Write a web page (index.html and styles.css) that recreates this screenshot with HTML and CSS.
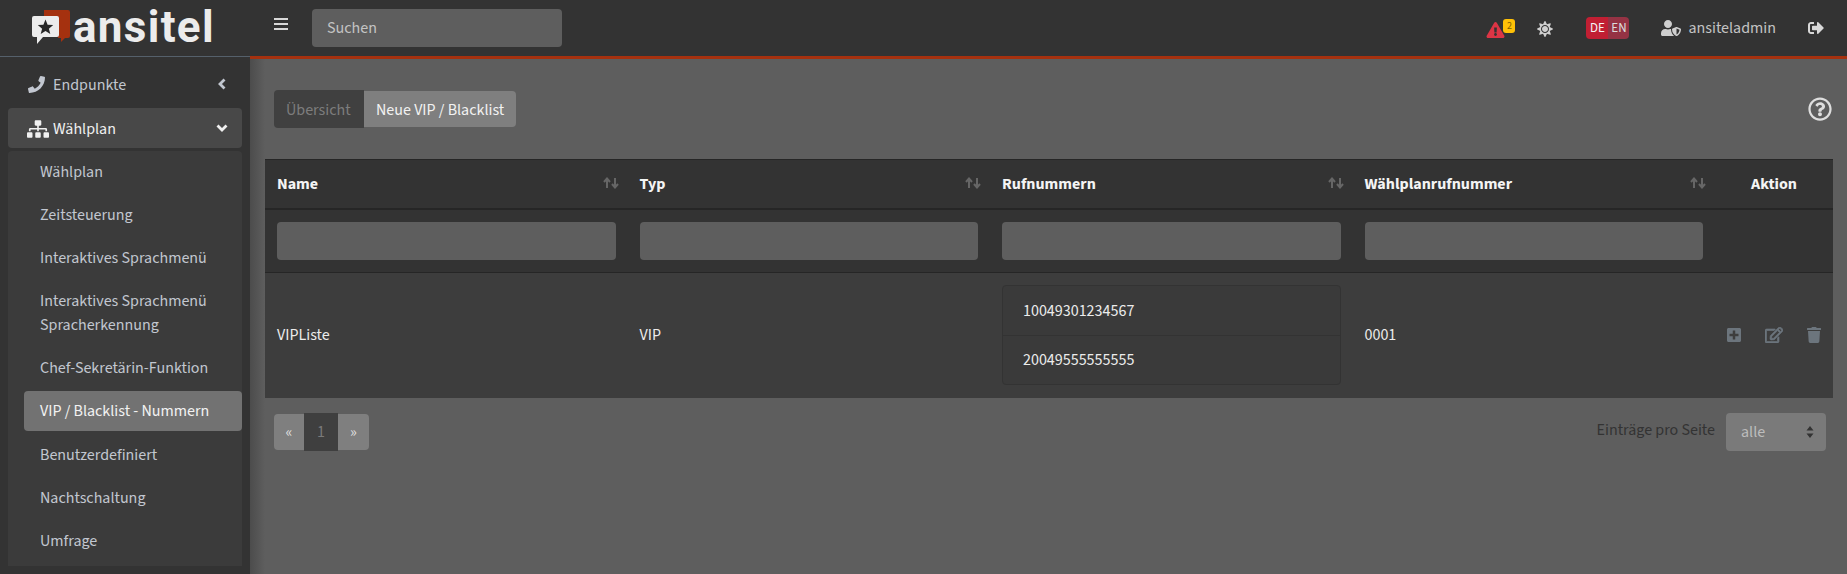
FILE: index.html
```html
<!DOCTYPE html>
<html lang="de">
<head>
<meta charset="utf-8">
<title>ansitel</title>
<link rel="stylesheet" href="styles.css">
</head>
<body>
<svg class="defs" width="0" height="0">
  <symbol id="sort" viewBox="0 0 16 12"><path d="M4 11V2M1 5l3-3.5L7 5M12 1v9M9 7l3 3.5L15 7" fill="none" stroke="currentColor" stroke-width="2"/></symbol>
</svg>
<div class="app">
  <aside class="sidebar">
    <div class="brand">
      <svg class="logo-mark" viewBox="0 0 40 34">
        <path d="M12 0h24a2 2 0 0 1 2 2v24a2 2 0 0 1-2 2h-3l-4 4v-4h-3V8H12z" fill="#a5310f"/>
        <path d="M2 6h23a2 2 0 0 1 2 2v17a2 2 0 0 1-2 2H11l-6 7v-7H2a2 2 0 0 1-2-2V8a2 2 0 0 1 2-2z" fill="#ececec"/>
        <path d="M13.5 9.500l2.100 5.200 5.600.4-4.300 3.600 1.400 5.400-4.800-3-4.800 3 1.400-5.400-4.300-3.600 5.600-.4z" fill="#262626"/>
      </svg>
      <span class="logo-text">ansitel</span>
    </div>
    <nav class="nav">
      <a class="nav-top">
        <svg class="nav-icon phone" viewBox="0 0 512 512"><path d="M493.4 24.6l-104-24c-11.3-2.6-22.9 3.3-27.5 13.9l-48 112c-4.2 9.8-1.4 21.3 6.9 28l60.6 49.6c-36 76.7-98.9 140.5-177.2 177.2l-49.6-60.6c-6.8-8.3-18.2-11.1-28-6.9l-112 48C3.9 366.5-2 378.1.6 389.4l24 104C27.1 504.2 36.7 512 48 512c256.1 0 464-207.5 464-464 0-11.2-7.7-20.9-18.6-23.4z"/></svg>
        <span class="nav-label">Endpunkte</span>
        <svg class="chev" viewBox="0 0 10 12"><path d="M7.500 1.500L3 6l4.500 4.500" fill="none" stroke="currentColor" stroke-width="2.800"/></svg>
      </a>
      <a class="nav-top nav-open">
        <svg class="nav-icon sitemap" viewBox="0 0 640 512"><path d="M128 352H32c-17.67 0-32 14.33-32 32v96c0 17.67 14.33 32 32 32h96c17.67 0 32-14.33 32-32v-96c0-17.67-14.33-32-32-32zm-24-80h192v48h48v-48h192v48h48v-57.59c0-21.17-17.23-38.41-38.41-38.41H344v-64h40c17.67 0 32-14.33 32-32V32c0-17.67-14.33-32-32-32H256c-17.67 0-32 14.33-32 32v96c0 17.67 14.33 32 32 32h40v64H94.41C73.23 224 56 241.23 56 262.41V320h48v-48zm264 80h-96c-17.67 0-32 14.33-32 32v96c0 17.67 14.33 32 32 32h96c17.67 0 32-14.33 32-32v-96c0-17.67-14.33-32-32-32zm240 0h-96c-17.67 0-32 14.33-32 32v96c0 17.67 14.33 32 32 32h96c17.67 0 32-14.33 32-32v-96c0-17.67-14.33-32-32-32z"/></svg>
        <span class="nav-label">Wählplan</span>
        <svg class="chev chev-open" viewBox="0 0 12 10"><path d="M1.500 2.500L6 7l4.500-4.500" fill="none" stroke="currentColor" stroke-width="2.800"/></svg>
      </a>
      <ul class="subnav">
        <li><a class="sub-item">Wählplan</a></li>
        <li><a class="sub-item">Zeitsteuerung</a></li>
        <li><a class="sub-item">Interaktives Sprachmenü</a></li>
        <li><a class="sub-item">Interaktives Sprachmenü Spracherkennung</a></li>
        <li><a class="sub-item">Chef-Sekretärin-Funktion</a></li>
        <li><a class="sub-item sub-active">VIP / Blacklist - Nummern</a></li>
        <li><a class="sub-item">Benutzerdefiniert</a></li>
        <li><a class="sub-item">Nachtschaltung</a></li>
        <li><a class="sub-item">Umfrage</a></li>
      </ul>
    </nav>
  </aside>
  <div class="main">
    <header class="topbar">
      <svg class="burger" viewBox="0 0 14 14"><path d="M0 2h14M0 7h14M0 12h14" stroke="currentColor" stroke-width="2.200"/></svg>
      <input class="search" type="text" placeholder="Suchen">
      <div class="top-right">
        <div class="alert">
          <svg class="alert-icon" viewBox="0 0 576 512"><path d="M569.517 440.013C587.975 472.007 564.806 512 527.94 512H48.054c-36.937 0-59.999-40.055-41.577-71.987L246.423 23.985c18.467-32.009 64.72-31.951 83.154 0l239.94 416.028zM288 354c-25.405 0-46 20.595-46 46s20.595 46 46 46 46-20.595 46-46-20.595-46-46-46zm-43.673-165.346l7.418 136c.347 6.364 5.609 11.346 11.982 11.346h48.546c6.373 0 11.635-4.982 11.982-11.346l7.418-136c.375-6.874-5.098-12.654-11.982-12.654h-63.383c-6.884 0-12.356 5.78-11.981 12.654z"/></svg>
          <span class="badge">2</span>
        </div>
        <svg class="sun" viewBox="0 0 512 512"><path d="M256 160c-52.9 0-96 43.1-96 96s43.1 96 96 96 96-43.1 96-96-43.1-96-96-96zm246.4 80.5l-94.7-47.3 33.5-100.4c4.5-13.600-8.400-26.500-21.900-21.900l-100.400 33.500-47.400-94.800c-6.400-12.800-24.600-12.800-31 0l-47.300 94.700L92.700 70.800c-13.600-4.500-26.500 8.400-21.900 21.900l33.500 100.400-94.700 47.400c-12.800 6.400-12.800 24.600 0 31l94.700 47.300-33.500 100.500c-4.500 13.600 8.400 26.500 21.900 21.900l100.400-33.500 47.300 94.700c6.400 12.800 24.600 12.800 31 0l47.300-94.700 100.400 33.500c13.600 4.500 26.500-8.400 21.900-21.900l-33.500-100.400 94.700-47.300c13-6.500 13-24.700.2-31.100zm-155.900 106c-49.900 49.900-131.100 49.900-181 0-49.900-49.900-49.900-131.100 0-181 49.900-49.900 131.100-49.900 181 0 49.900 49.900 49.900 131.100 0 181z"/></svg>
        <div class="lang"><span class="lang-de">DE</span><span class="lang-en">EN</span></div>
        <svg class="user-icon" viewBox="0 0 640 512"><path d="M622.3 271.100l-115.200-45c-4.100-1.600-12.600-3.700-22.200 0l-115.200 45c-10.700 4.200-17.700 14-17.700 24.900 0 111.600 68.700 188.800 132.900 213.900 9.600 3.700 18 1.600 22.200 0C558.400 489.900 640 420.500 640 296c0-10.900-7-20.700-17.700-24.900zM496 462.400V273.300l95.500 37.300c-5.600 87.100-60.900 135.400-95.500 151.800zM224 256c70.700 0 128-57.300 128-128S294.700 0 224 0 96 57.300 96 128s57.300 128 128 128zm96 40c0-2.500.8-4.800 1.100-7.200-2.500-.1-4.900-.8-7.500-.8h-16.700c-22.200 10.200-46.900 16-72.900 16s-50.600-5.800-72.900-16h-16.700C60.200 288 0 348.200 0 422.400V464c0 26.500 21.500 48 48 48h352c6.800 0 13.300-1.500 19.200-4-54-42.900-99.200-116.700-99.200-212z"/></svg>
        <span class="user-name">ansiteladmin</span>
        <svg class="logout" viewBox="0 0 512 512"><path d="M497 273L329 441c-15 15-41 4.500-41-17v-96H152c-13.300 0-24-10.700-24-24v-96c0-13.300 10.700-24 24-24h136V88c0-21.400 25.900-32 41-17l168 168c9.300 9.400 9.300 24.600 0 34zM192 436v-40c0-6.600-5.400-12-12-12H96c-17.700 0-32-14.300-32-32V160c0-17.700 14.300-32 32-32h84c6.600 0 12-5.400 12-12V76c0-6.600-5.400-12-12-12H96c-53 0-96 43-96 96v192c0 53 43 96 96 96h84c6.600 0 12-5.400 12-12z"/></svg>
      </div>
    </header>
    <main class="content">
      <div class="toolbar">
        <div class="tabs">
          <span class="tab tab-off">Übersicht</span>
          <span class="tab tab-on">Neue VIP / Blacklist</span>
        </div>
        <svg class="help" viewBox="0 0 512 512"><path d="M256 8C119 8 8 119.080 8 256c0 137 111 248 248 248s248-111 248-248C504 119.080 393 8 256 8zm0 448c-110.500 0-200-89.500-200-200 0-110.500 89.500-200 200-200 110.500 0 200 89.500 200 200 0 110.500-89.500 200-200 200zm107.200-255.200c0 67.060-72.430 68.090-72.430 92.860V300c0 6.630-5.370 12-12 12h-45.540c-6.630 0-12-5.370-12-12v-8.660c0-35.730 27.090-50.010 47.560-61.490 17.550-9.840 28.310-16.530 28.310-29.580 0-17.250-22.010-28.700-39.800-28.700-23.200 0-33.910 10.980-48.960 29.970-4.060 5.120-11.460 6.070-16.660 2.130l-27.760-21.050c-5.100-3.870-6.250-11.050-2.640-16.340C184.800 131.490 214.940 112 261.790 112c49.080 0 101.410 38.310 101.410 88.800zM298 368c0 23.160-18.840 42-42 42s-42-18.840-42-42 18.840-42 42-42 42 18.840 42 42z"/></svg>
      </div>
      <table class="grid">
        <colgroup><col class="col-data"><col class="col-data"><col class="col-data"><col class="col-data"><col class="col-action"></colgroup>
        <thead>
          <tr class="head-row">
            <th><div class="th-inner">Name<svg class="sort"><use href="#sort"/></svg></div></th>
            <th><div class="th-inner">Typ<svg class="sort"><use href="#sort"/></svg></div></th>
            <th><div class="th-inner">Rufnummern<svg class="sort"><use href="#sort"/></svg></div></th>
            <th><div class="th-inner">Wählplanrufnummer<svg class="sort"><use href="#sort"/></svg></div></th>
            <th class="th-action">Aktion</th>
          </tr>
          <tr class="filter-row">
            <td><div class="filter"></div></td>
            <td><div class="filter"></div></td>
            <td><div class="filter"></div></td>
            <td><div class="filter"></div></td>
            <td></td>
          </tr>
        </thead>
        <tbody>
          <tr class="data-row">
            <td>VIPListe</td>
            <td>VIP</td>
            <td>
              <ul class="numbers">
                <li>10049301234567</li>
                <li>20049555555555</li>
              </ul>
            </td>
            <td>0001</td>
            <td>
              <div class="actions">
                <svg class="act act-plus" viewBox="0 0 448 512"><path d="M400 32H48C21.500 32 0 53.500 0 80v352c0 26.500 21.500 48 48 48h352c26.500 0 48-21.500 48-48V80c0-26.500-21.500-48-48-48zm-32 252c0 6.600-5.400 12-12 12h-92v92c0 6.600-5.400 12-12 12h-56c-6.600 0-12-5.400-12-12v-92H92c-6.600 0-12-5.400-12-12v-56c0-6.600 5.400-12 12-12h92v-92c0-6.600 5.400-12 12-12h56c6.600 0 12 5.400 12 12v92h92c6.600 0 12 5.400 12 12v56z"/></svg>
                <svg class="act act-edit" viewBox="0 0 576 512"><path d="M402.300 344.900l32-32c5-5 13.700-1.500 13.700 5.700V464c0 26.500-21.500 48-48 48H48c-26.500 0-48-21.500-48-48V112c0-26.500 21.500-48 48-48h273.500c7.100 0 10.700 8.600 5.700 13.700l-32 32c-1.500 1.500-3.500 2.300-5.700 2.300H48v352h352V350.500c0-2.100.8-4.100 2.300-5.600zm156.600-201.800L296.300 405.700l-90.400 10c-26.200 2.900-48.500-19.200-45.600-45.600l10-90.400L432.900 17.100c22.900-22.900 59.900-22.900 82.700 0l43.200 43.200c22.900 22.900 22.900 60 .1 82.800zM460.100 174L402 115.900 216.200 301.800l-7.300 65.300 65.300-7.300L460.100 174zm64.800-79.700l-43.200-43.200c-4.100-4.100-10.800-4.100-14.800 0L436 82l58.100 58.100 30.900-30.900c4-4.200 4-10.800-.1-14.900z"/></svg>
                <svg class="act act-trash" viewBox="0 0 448 512"><path d="M432 32H312l-9.400-18.700A24 24 0 0 0 281.100 0H166.800a23.720 23.720 0 0 0-21.400 13.300L136 32H16A16 16 0 0 0 0 48v32a16 16 0 0 0 16 16h416a16 16 0 0 0 16-16V48a16 16 0 0 0-16-16zM53.200 467a48 48 0 0 0 47.900 45h245.800a48 48 0 0 0 47.900-45L416 128H32z"/></svg>
              </div>
            </td>
          </tr>
        </tbody>
      </table>
      <div class="footer-bar">
        <div class="pager">
          <span class="page page-arrow">«</span>
          <span class="page page-current">1</span>
          <span class="page page-arrow">»</span>
        </div>
        <div class="per-page">
          <span class="per-label">Einträge pro Seite</span>
          <div class="select">alle
            <svg class="select-arrows" viewBox="0 0 8 12"><path d="M4 0l3.500 4.500h-7zM4 12L.5 7.500h7z"/></svg>
          </div>
        </div>
      </div>
    </main>
  </div>
</div>
</body>
</html>
```
FILE: styles.css
```css
* { box-sizing: border-box; }
html, body { margin: 0; height: 100%; overflow: hidden; }
body {
  font-family: "Source Sans 3", "Noto Sans CJK SC", sans-serif;
  font-size: 16px;
  line-height: 24px;
  color: #e8e8e8;
  background: #5e5e5e;
}
ul { list-style: none; margin: 0; padding: 0; }
.defs { position: absolute; }
.app { display: flex; height: 574px; }

/* sidebar */
.sidebar { width: 250px; flex: none; background: #333; overflow: hidden; }
.brand {
  height: 57px;
  border-bottom: 1px solid #55606b;
  display: flex;
  align-items: flex-start;
  padding: 10px 0 0 32px;
}
.logo-mark { width: 40px; height: 34px; flex: none; }
.logo-text {
  font-family: Roboto, sans-serif;
  font-weight: 700;
  font-size: 44px;
  line-height: 34px;
  letter-spacing: 1.300px;
  color: #ececec;
  margin-left: 1px;
}
.nav { padding: 7px 8px 0; }
.nav-top {
  display: flex;
  align-items: center;
  height: 40px;
  margin-bottom: 4px;
  padding: 2px 15px 0 20px;
  color: #c2c7d0;
  border-radius: 4px;
}
.nav-icon { fill: currentColor; flex: none; }
.phone { width: 17px; height: 17px; margin: -2px 8px 0 0; }
.sitemap { width: 22px; height: 18px; margin: -1px 4px 0 0; }
.nav-label { flex: 1; }
.chev { width: 10px; height: 12px; flex: none; margin-top: -3px; }
.chev-open { width: 12px; height: 10px; margin-right: -1px; }
.nav-open { background: #484848; color: #f0f0f0; margin-bottom: 3px; padding-left: 19px; }
.subnav { background: #3b3b3b; border-radius: 4px 4px 0 0; padding-bottom: 2px; }
.sub-item {
  display: block;
  margin: 0 0 3px 16px;
  padding: 9.500px 15px 7.500px 16px;
  color: #c2c7d0;
  border-radius: 4px;
  line-height: 23.300px;
}
.sub-active { background: #727272; color: #f2f2f2; }

/* top bar */
.main {
  flex: 1;
  min-width: 0;
  display: flex;
  flex-direction: column;
  background: linear-gradient(to right, #4c4c4c, #5e5e5e 15px);
}
.topbar {
  height: 59px;
  flex: none;
  background: #333;
  border-bottom: 3px solid #a5310f;
  display: flex;
  align-items: flex-start;
  padding: 0 23px 0 24px;
}
.burger { width: 14px; height: 14px; margin-top: 17px; color: #d8d8d8; flex: none; }
.search {
  width: 250px;
  height: 38px;
  margin: 9px 0 0 24px;
  padding: 0 15px;
  border: 0;
  border-radius: 4px;
  background: #5e5e5e;
  font: inherit;
  color: #ddd;
}
.search::placeholder { color: #c4c4c4; opacity: 1; }
.top-right { margin-left: auto; display: flex; align-items: center; height: 56px; }
.alert { display: flex; align-items: flex-start; }
.alert-icon { width: 19px; height: 16px; fill: #dc3545; margin-top: 3px; flex: none; }
.badge {
  width: 12px;
  height: 14px;
  margin: 0 0 0 -2px;
  background: #ffc107;
  border-radius: 3px;
  color: #806000;
  font-size: 10px;
  line-height: 14px;
  text-align: center;
}
.sun { width: 16px; height: 16px; fill: #cfcfcf; margin: 1px 0 0 22px; flex: none; }
.lang {
  display: flex;
  margin-left: 33px;
  height: 22px;
  border-radius: 4px;
  overflow: hidden;
  font-size: 13px;
  line-height: 22px;
}
.lang-de { width: 22px; background: #c11f33; color: #f4f4f4; text-align: center; }
.lang-en { width: 21px; background: #953344; color: #dcdcdc; text-align: center; }
.user-icon { width: 20px; height: 16px; fill: #cfcfcf; margin-left: 32px; flex: none; }
.user-name { margin-left: 7px; color: #c4c4c4; }
.logout { width: 16px; height: 16px; fill: #d8d8d8; margin-left: 32px; flex: none; }

/* content */
.content { flex: 1; padding: 31px 14px 0 15px; }
.toolbar {
  display: flex;
  justify-content: space-between;
  align-items: flex-start;
  height: 69px;
  padding-left: 9px;
}
.tabs { display: flex; align-items: center; height: 38px; }
.tab { display: block; padding: 0 12px; white-space: nowrap; }
.tab-off { width: 90px; height: 38px; line-height: 40px; background: #404040; color: #7d7d7d; border-radius: 4px 0 0 4px; }
.tab-on { width: 152px; height: 36px; line-height: 38px; background: #7f7f7f; color: #f2f2f2; border-radius: 0 4px 4px 0; }
.help { width: 24px; height: 24px; fill: #dedede; margin: 7px 1px 0 0; flex: none; }

/* table */
.grid { width: 100%; table-layout: fixed; border-collapse: collapse; }
.col-data { width: 362.500px; }
.head-row th {
  height: 49px;
  background: #333;
  border-top: 1px solid #262626;
  border-bottom: 2px solid #262626;
  padding: 1px 12px 0;
  color: #f4f4f4;
  font-weight: 700;
  text-align: left;
}
.th-inner { display: flex; justify-content: space-between; align-items: center; margin-right: -3px; }
.sort { width: 16px; height: 12px; color: #666; margin-top: -3px; flex: none; }
.head-row .th-action { text-align: center; }
.filter-row td {
  height: 64px;
  background: #333;
  border-bottom: 1px solid #262626;
  padding: 0 12px;
}
.filter { height: 38px; background: #5e5e5e; border-radius: 4px; }
.data-row td { height: 125px; background: #3d3d3d; padding: 0 12px; color: #ececec; }
.numbers {
  background: #3a3a3a;
  border: 1px solid #333;
  border-radius: 4px;
}
.numbers li { height: 49px; line-height: 51px; padding-left: 20px; }
.numbers li + li { border-top: 1px solid #333; line-height: 49px; }
.actions { display: flex; align-items: center; justify-content: space-between; }
.act { fill: #6c757d; flex: none; height: 16px; }
.act-plus { width: 14px; }
.act-edit { width: 18px; stroke: #6c757d; stroke-width: 20px; }
.act-trash { width: 14px; }

/* footer */
.footer-bar {
  display: flex;
  justify-content: space-between;
  align-items: flex-start;
  padding: 15px 7px 0 9px;
}
.pager { display: flex; align-items: center; height: 38px; }
.page { display: block; text-align: center; }
.page-arrow { width: 30px; height: 36px; line-height: 36px; background: #7f7f7f; color: #dedede; }
.page-arrow:first-child { border-radius: 4px 0 0 4px; }
.page-arrow:last-child { width: 31px; border-radius: 0 4px 4px 0; }
.page-current { width: 34px; height: 38px; line-height: 38px; background: #3f3f3f; color: #7a7a7a; }
.per-page { display: flex; align-items: center; }
.per-label { color: #333; margin-right: 11px; margin-top: -4px; }
.select {
  position: relative;
  width: 100px;
  height: 38px;
  line-height: 39px;
  padding-left: 15px;
  background: #7a7a7a;
  border-radius: 4px;
  color: #bdbdbd;
}
.select-arrows { position: absolute; right: 12px; top: 13px; width: 8px; height: 12px; fill: #333; }
```
